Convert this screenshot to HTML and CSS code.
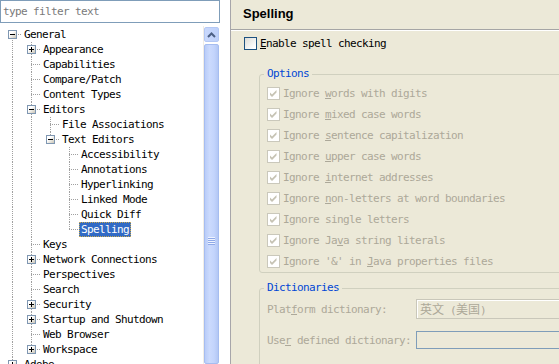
FILE: index.html
```html
<!DOCTYPE html>
<html>
<head>
<meta charset="utf-8">
<link rel="stylesheet" href="styles.css">
</head>
<body>
<div class="left">
  <div class="filter">type filter text</div>
  <div class="treewrap">
    <div class="tree">
      <div class="row"><span class="cn first"><span class="bx"></span></span><span class="lb">General</span></div>
      <div class="row"><span class="g"></span><span class="cn"><span class="bx plus"></span></span><span class="lb">Appearance</span></div>
      <div class="row"><span class="g"></span><span class="cn"></span><span class="lb">Capabilities</span></div>
      <div class="row"><span class="g"></span><span class="cn"></span><span class="lb">Compare/Patch</span></div>
      <div class="row"><span class="g"></span><span class="cn"></span><span class="lb">Content Types</span></div>
      <div class="row"><span class="g"></span><span class="cn"><span class="bx"></span></span><span class="lb">Editors</span></div>
      <div class="row"><span class="g"></span><span class="g"></span><span class="cn"></span><span class="lb">File Associations</span></div>
      <div class="row"><span class="g"></span><span class="g"></span><span class="cn end"><span class="bx"></span></span><span class="lb">Text Editors</span></div>
      <div class="row"><span class="g"></span><span class="g"></span><span class="e"></span><span class="cn"></span><span class="lb">Accessibility</span></div>
      <div class="row"><span class="g"></span><span class="g"></span><span class="e"></span><span class="cn"></span><span class="lb">Annotations</span></div>
      <div class="row"><span class="g"></span><span class="g"></span><span class="e"></span><span class="cn"></span><span class="lb">Hyperlinking</span></div>
      <div class="row"><span class="g"></span><span class="g"></span><span class="e"></span><span class="cn"></span><span class="lb">Linked Mode</span></div>
      <div class="row"><span class="g"></span><span class="g"></span><span class="e"></span><span class="cn"></span><span class="lb">Quick Diff</span></div>
      <div class="row"><span class="g"></span><span class="g"></span><span class="e"></span><span class="cn end"></span><span class="lb sel">Spelling</span></div>
      <div class="row"><span class="g"></span><span class="cn"></span><span class="lb">Keys</span></div>
      <div class="row"><span class="g"></span><span class="cn"><span class="bx plus"></span></span><span class="lb">Network Connections</span></div>
      <div class="row"><span class="g"></span><span class="cn"></span><span class="lb">Perspectives</span></div>
      <div class="row"><span class="g"></span><span class="cn"></span><span class="lb">Search</span></div>
      <div class="row"><span class="g"></span><span class="cn"><span class="bx plus"></span></span><span class="lb">Security</span></div>
      <div class="row"><span class="g"></span><span class="cn"><span class="bx plus"></span></span><span class="lb">Startup and Shutdown</span></div>
      <div class="row"><span class="g"></span><span class="cn"></span><span class="lb">Web Browser</span></div>
      <div class="row"><span class="g"></span><span class="cn end"><span class="bx plus"></span></span><span class="lb">Workspace</span></div>
      <div class="row"><span class="cn"><span class="bx plus"></span></span><span class="lb">Adobe</span></div>
    </div>
    <div class="sb">
      <div class="up"><svg width="9" height="6" viewBox="0 0 9 6"><path d="M1 5 L4.5 1.5 L8 5" fill="none" stroke="#4d6185" stroke-width="2"/></svg></div>
      <div class="thumb"><div class="grip"></div></div>
    </div>
  </div>
</div>
<div class="right">
  <div class="hdr">Spelling</div>
  <div class="content">
    <div class="chk"><span class="box en"></span><span><u>E</u>nable spell checking</span></div>
    <fieldset class="grp">
      <legend>Options</legend>
      <div class="opts">
        <div class="opt"><span class="box dis"><svg width="11" height="11" viewBox="0 0 11 11"><polygon points="2,4.5 4,6.5 8.5,2 8.5,4.5 4,9 2,7" fill="#c6c3b4"/></svg></span><span>Ignore <u>w</u>ords with digits</span></div>
        <div class="opt"><span class="box dis"><svg width="11" height="11" viewBox="0 0 11 11"><polygon points="2,4.5 4,6.5 8.5,2 8.5,4.5 4,9 2,7" fill="#c6c3b4"/></svg></span><span>Ignore <u>m</u>ixed case words</span></div>
        <div class="opt"><span class="box dis"><svg width="11" height="11" viewBox="0 0 11 11"><polygon points="2,4.5 4,6.5 8.5,2 8.5,4.5 4,9 2,7" fill="#c6c3b4"/></svg></span><span>Ignore <u>s</u>entence capitalization</span></div>
        <div class="opt"><span class="box dis"><svg width="11" height="11" viewBox="0 0 11 11"><polygon points="2,4.5 4,6.5 8.5,2 8.5,4.5 4,9 2,7" fill="#c6c3b4"/></svg></span><span>Ignore <u>u</u>pper case words</span></div>
        <div class="opt"><span class="box dis"><svg width="11" height="11" viewBox="0 0 11 11"><polygon points="2,4.5 4,6.5 8.5,2 8.5,4.5 4,9 2,7" fill="#c6c3b4"/></svg></span><span>Ignore <u>i</u>nternet addresses</span></div>
        <div class="opt"><span class="box dis"><svg width="11" height="11" viewBox="0 0 11 11"><polygon points="2,4.5 4,6.5 8.5,2 8.5,4.5 4,9 2,7" fill="#c6c3b4"/></svg></span><span>Ignore <u>n</u>on-letters at word boundaries</span></div>
        <div class="opt"><span class="box dis"><svg width="11" height="11" viewBox="0 0 11 11"><polygon points="2,4.5 4,6.5 8.5,2 8.5,4.5 4,9 2,7" fill="#c6c3b4"/></svg></span><span>Ignore single letters</span></div>
        <div class="opt"><span class="box dis"><svg width="11" height="11" viewBox="0 0 11 11"><polygon points="2,4.5 4,6.5 8.5,2 8.5,4.5 4,9 2,7" fill="#c6c3b4"/></svg></span><span>Ignore Ja<u>v</u>a string literals</span></div>
        <div class="opt"><span class="box dis"><svg width="11" height="11" viewBox="0 0 11 11"><polygon points="2,4.5 4,6.5 8.5,2 8.5,4.5 4,9 2,7" fill="#c6c3b4"/></svg></span><span>Ignore '&amp;' in <u>J</u>ava properties files</span></div>
      </div>
    </fieldset>
    <fieldset class="grp dict">
      <legend>Dictionaries</legend>
      <div class="drows">
        <div class="drow"><span class="dl">Plat<u>f</u>orm dictionary:</span><span class="combo"><span class="cjk">英文</span> (<span class="cjk">美国</span>)</span></div>
        <div class="drow"><span class="dl">Use<u>r</u> defined dictionary:</span><span class="tf"></span></div>
      </div>
    </fieldset>
  </div>
</div>
</body>
</html>
```

FILE: styles.css
```css
html, body {
  margin: 0;
}
body {
  width: 559px;
  height: 364px;
  overflow: hidden;
  display: flex;
  font: 11px/15px "DejaVu Sans Mono", "Noto Sans CJK SC", monospace;
  letter-spacing: -0.62px;
  background: #ece9d8;
  color: #000;
}
.left {
  width: 230px;
  flex: none;
  background: #fff;
  border-right: 1px solid #a7a6aa;
  display: flex;
  flex-direction: column;
}
.filter {
  width: 220px;
  height: 23px;
  box-sizing: border-box;
  border: 1px solid #7f9db9;
  padding-left: 2px;
  line-height: 21px;
  color: #7a7a7a;
}
.treewrap {
  width: 220px;
  margin-top: 3px;
  flex: 1;
  min-height: 0;
  display: flex;
}
.tree {
  flex: 1;
  overflow: hidden;
  padding-top: 1px;
}
.row {
  display: flex;
  height: 15px;
  padding-left: 3px;
  white-space: nowrap;
}
.g, .e, .cn {
  width: 19px;
  height: 15px;
  flex: none;
}
.g {
  background: repeating-linear-gradient(#a0a0a0 0 1px, transparent 1px 2px) 9px 0 / 1px 15px no-repeat;
}
.cn {
  background:
    repeating-linear-gradient(to right, #a0a0a0 0 1px, transparent 1px 2px) 9px 7px / 10px 1px no-repeat,
    repeating-linear-gradient(#a0a0a0 0 1px, transparent 1px 2px) 9px 0 / 1px 15px no-repeat;
}
.cn.end {
  background-size: 10px 1px, 1px 8px;
}
.cn.first {
  background-position: 9px 7px, 9px 7px;
  background-size: 10px 1px, 1px 8px;
}
.bx {
  display: block;
  width: 9px;
  height: 9px;
  box-sizing: border-box;
  margin: 3px 0 0 5px;
  border: 1px solid #7f97b2;
  background:
    linear-gradient(#000, #000) 1px 3px / 5px 1px no-repeat,
    linear-gradient(135deg, #ffffff 35%, #c9c4b4);
}
.bx.plus {
  background:
    linear-gradient(#000, #000) 1px 3px / 5px 1px no-repeat,
    linear-gradient(#000, #000) 3px 1px / 1px 5px no-repeat,
    linear-gradient(135deg, #ffffff 35%, #c9c4b4);
}
.lb {
  padding: 0 2px;
  line-height: 15px;
}
.lb.sel {
  background: #316ac5;
  color: #fff;
  outline: 1px dotted #c8a850;
  outline-offset: -1px;
}
.sb {
  width: 17px;
  flex: none;
  box-sizing: border-box;
  border-left: 1px solid #f1ede6;
  padding-top: 1px;
  display: flex;
  flex-direction: column;
}
.up {
  height: 15px;
  box-sizing: border-box;
  margin: 0 1px 2px 0;
  border: 1px solid #b4c8f4;
  border-radius: 2px;
  background: linear-gradient(to right, #c9d8fc, #bed1fa);
  display: flex;
  align-items: center;
  justify-content: center;
}
.thumb {
  flex: 1;
  margin-right: 1px;
  box-sizing: border-box;
  border: 1px solid #a6bdf0;
  border-radius: 2px;
  background: linear-gradient(to right, #b9ccf8, #cbdafd 35%, #c3d4fc 70%, #b3c7f4);
  padding-top: 192px;
}
.grip {
  width: 7px;
  height: 8px;
  margin: 0 auto;
  background: repeating-linear-gradient(#eef3ff 0 1px, #8fa9e8 1px 2px);
}
.right {
  flex: 1;
  min-width: 0;
  overflow: hidden;
  background: #ece9d8;
}
.hdr {
  height: 29px;
  line-height: 28px;
  padding-left: 12px;
  font: bold 13px/28px "Liberation Sans", Arial, sans-serif;
  letter-spacing: 0;
  border-bottom: 1px solid #a5a5a5;
  box-shadow: 0 1px 0 #fff;
}
.content {
  padding: 7px 0 0 13px;
}
.chk {
  display: flex;
  align-items: center;
  height: 13px;
  gap: 3px;
  white-space: nowrap;
}
.box {
  width: 13px;
  height: 13px;
  box-sizing: border-box;
  flex: none;
  display: flex;
}
.box.en {
  border: 1px solid #1c5180;
  background: linear-gradient(135deg, #dcdcd7, #ffffff 85%);
}
.box.dis {
  border: 1px solid #cac8bb;
  background: #fff;
}
.grp {
  margin: 17px -20px 0 15px;
  padding: 0 0 4px 4px;
  border: 1px solid #d0d0bf;
  border-radius: 3px;
  min-width: 0;
}
.grp legend {
  padding: 0 3px;
  color: #0046d5;
  line-height: 14px;
}
.opts {
  padding: 6px 0 0 3px;
  display: flex;
  flex-direction: column;
  gap: 8px;
  color: #aca899;
}
.opt {
  display: flex;
  align-items: center;
  height: 13px;
  gap: 3px;
  white-space: nowrap;
}
.dict {
  margin-top: 8px;
}
.drows {
  padding: 4px 0 20px 3px;
  display: flex;
  flex-direction: column;
  gap: 12px;
  color: #aca899;
}
.drow {
  display: flex;
  align-items: center;
  white-space: nowrap;
}
.dl {
  width: 149px;
  flex: none;
}
.combo {
  flex: 1;
  height: 20px;
  box-sizing: border-box;
  border: 1px solid #c9c7ba;
  box-shadow: inset 1px 1px #fff;
  padding-left: 3px;
  line-height: 18px;
}
.cjk {
  font-family: "Noto Sans CJK SC", sans-serif;
  font-size: 12px;
  letter-spacing: 0;
}
.tf {
  flex: 1;
  height: 18px;
  box-sizing: border-box;
  border: 1px solid #7f9db9;
}
```
